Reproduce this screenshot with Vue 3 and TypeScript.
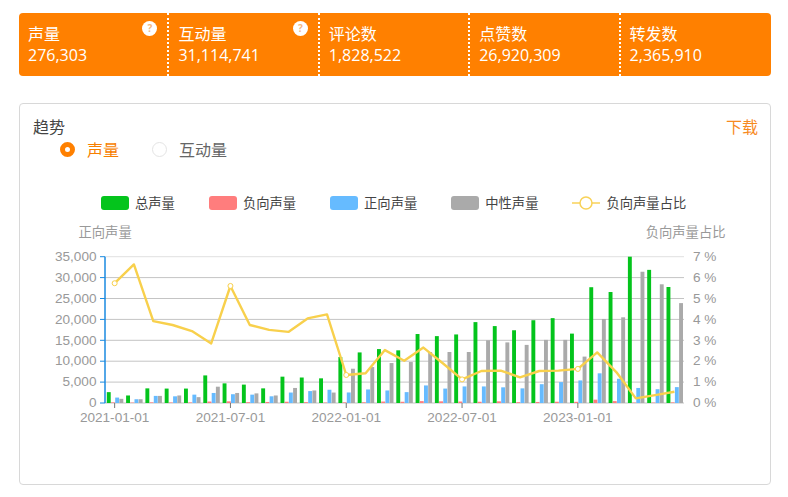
<script setup lang="ts">
const stats = [
  { label: '声量', value: '276,303', help: true },
  { label: '互动量', value: '31,114,741', help: true },
  { label: '评论数', value: '1,828,522', help: false },
  { label: '点赞数', value: '26,920,309', help: false },
  { label: '转发数', value: '2,365,910', help: false }
]

const legend = [
  { name: '总声量', color: '#04c41c' },
  { name: '负向声量', color: '#ff7d7d' },
  { name: '正向声量', color: '#66bbff' },
  { name: '中性声量', color: '#aaaaaa' }
]

const left = 105
const right = 684
const top = 256.7
const bottom = 403
const band = (right - left) / 30
const unit = (bottom - top) / 7

const total = [2600, 1800, 3500, 3450, 3450, 6600, 4700, 4400, 3500, 6300, 6100, 5900, 11000, 12100, 12900, 12600, 16500, 16000, 16400, 19350, 18400, 17400, 19800, 20300, 16600, 27700, 26550, 35000, 31850, 27750]
const neg = [150, 100, 150, 120, 130, 350, 400, 200, 250, 300, 200, 100, 150, 170, 350, 300, 450, 400, 350, 300, 400, 200, 250, 300, 280, 800, 450, 100, 100, 150]
const pos = [1300, 900, 1700, 1600, 2000, 2400, 2100, 2000, 1600, 2500, 2850, 3170, 2520, 3240, 3000, 2600, 4200, 3450, 3960, 3960, 3750, 3500, 4500, 5000, 5400, 7100, 5800, 3600, 3300, 3800]
const neu = [1000, 900, 1700, 1800, 1400, 3900, 2400, 2300, 1800, 3600, 3000, 2500, 8200, 8600, 9560, 9800, 12200, 12200, 12200, 15000, 14500, 13900, 15100, 15100, 11100, 20100, 20500, 31400, 28400, 23900]
const ratio = [5.73, 6.63, 3.92, 3.73, 3.44, 2.85, 5.6, 3.73, 3.5, 3.4, 4.05, 4.24, 1.34, 1.42, 2.53, 2.02, 2.65, 1.9, 1.13, 1.53, 1.55, 1.23, 1.53, 1.55, 1.63, 2.42, 1.47, 0.22, 0.38, 0.54]

const series = [
  { data: total, color: '#04c41c', offset: 1.8 },
  { data: neg, color: '#ff7d7d', offset: 6 },
  { data: pos, color: '#66bbff', offset: 10.2 },
  { data: neu, color: '#aaaaaa', offset: 14.4 }
]

const barWidth = 3.9
const bars = series.flatMap((s) =>
  s.data.map((v, i) => {
    const h = (v / 5000) * unit
    return { x: left + i * band + s.offset, y: bottom - h, h, color: s.color }
  })
)

const center = (i: number) => left + (i + 0.5) * band
const ratioY = (p: number) => bottom - p * unit
const linePoints = ratio.map((p, i) => `${center(i).toFixed(1)},${ratioY(p).toFixed(1)}`).join(' ')
const markers = [0, 6, 12, 18, 24].map((i) => ({ x: center(i), y: ratioY(ratio[i]) }))

const xLabels = [
  { i: 0, text: '2021-01-01' },
  { i: 6, text: '2021-07-01' },
  { i: 12, text: '2022-01-01' },
  { i: 18, text: '2022-07-01' },
  { i: 24, text: '2023-01-01' }
].map((l) => ({ x: center(l.i), text: l.text }))

const yRows = [0, 1, 2, 3, 4, 5, 6, 7].map((n) => ({
  y: bottom - n * unit,
  left: n === 0 ? '0' : (n * 5000).toLocaleString('en-US'),
  right: `${n} %`,
  top: n === 7
}))
</script>

<template>
  <div class="page">
    <section class="stats">
      <div v-for="s in stats" :key="s.label" class="stat">
        <div class="stat-label">{{ s.label }}</div>
        <div class="stat-value">{{ s.value }}</div>
        <span v-if="s.help" class="help">?</span>
      </div>
    </section>

    <section class="panel">
      <header class="panel-head">
        <span class="panel-title">趋势</span>
        <span class="download">下载</span>
      </header>
      <div class="radios">
        <span class="radio radio-on"><i class="dot"></i>声量</span>
        <span class="radio"><i class="dot"></i>互动量</span>
      </div>
      <div class="legend">
        <span v-for="l in legend" :key="l.name" class="legend-item">
          <i class="swatch" :style="{ background: l.color }"></i>{{ l.name }}
        </span>
        <span class="legend-item">
          <svg class="legend-line" width="28" height="14" viewBox="0 0 28 14">
            <line x1="0" y1="7" x2="28" y2="7" stroke="#f8d258" stroke-width="1.5" />
            <circle cx="14" cy="7" r="6" fill="#fff" stroke="#f8d258" stroke-width="1.5" />
          </svg>负向声量占比
        </span>
      </div>
      <svg class="chart" width="750" height="215" viewBox="20 220 750 215">
        <text class="axis-name" x="78.5" y="237">正向声量</text>
        <text class="axis-name" x="725.5" y="237" text-anchor="end">负向声量占比</text>

        <g v-for="r in yRows" :key="r.right">
          <line :x1="left" :x2="right" :y1="r.y" :y2="r.y" :stroke="r.top ? '#e0e0e0' : '#c4c4c4'" />
          <line :x1="left - 5" :x2="left" :y1="r.y" :y2="r.y" stroke="#1a8ae0" />
          <text class="tick" x="96.5" :y="r.y + 4.2" text-anchor="end">{{ r.left }}</text>
          <text class="tick" x="693" :y="r.y + 4.2">{{ r.right }}</text>
        </g>

        <line :x1="left" :x2="left" :y1="top" :y2="bottom" stroke="#1a8ae0" stroke-width="1.5" />

        <rect
          v-for="(b, i) in bars"
          :key="i"
          :x="b.x"
          :y="b.y"
          :width="barWidth"
          :height="b.h"
          :fill="b.color"
        />

        <g v-for="l in xLabels" :key="l.text">
          <line :x1="l.x" :x2="l.x" :y1="bottom" :y2="bottom + 5" stroke="#777" />
          <text class="tick" :x="l.x" y="422" text-anchor="middle">{{ l.text }}</text>
        </g>

        <polyline :points="linePoints" fill="none" stroke="#f8d04c" stroke-width="2.4" stroke-linejoin="round" />
        <circle
          v-for="m in markers"
          :key="m.x"
          :cx="m.x"
          :cy="m.y"
          r="2.5"
          fill="#fff"
          stroke="#f8d04c"
        />
      </svg>
    </section>
  </div>
</template>

<style>
html,
body {
  margin: 0;
  background: #fff;
}
</style>

<style scoped>
.page {
  width: 788px;
  height: 497px;
  box-sizing: border-box;
  padding: 13px 17px 12px 19px;
  font-family: "Open Sans", "Noto Sans CJK SC", sans-serif;
  overflow: hidden;
}

.stats {
  display: grid;
  grid-template-columns: repeat(5, 1fr);
  height: 63px;
  background: #ff8000;
  border-radius: 4px;
  color: #fff;
  font-size: 16px;
}

.stat {
  position: relative;
  box-sizing: border-box;
  padding: 9px 9px 0;
  border-right: 2px dotted #fff;
  line-height: 22px;
}

.stat:last-child {
  border-right: 0;
}

.stat-label {
  font-family: "Noto Sans CJK SC", sans-serif;
}

.help {
  position: absolute;
  top: 8px;
  right: 10px;
  width: 15px;
  height: 15px;
  border-radius: 50%;
  background: #fff;
  color: #f5b880;
  font-size: 10px;
  line-height: 15px;
  text-align: center;
  font-weight: 700;
}

.panel {
  margin-top: 27px;
  height: 382px;
  box-sizing: border-box;
  border: 1px solid #d8d8d8;
  border-radius: 4px;
  font-family: "Noto Sans CJK SC", sans-serif;
}

.panel-head {
  display: flex;
  justify-content: space-between;
  padding: 11px 12px 0 13px;
  font-size: 16px;
  line-height: 22px;
}

.panel-title {
  color: #444;
}

.download {
  color: #f78a1f;
}

.radios {
  display: flex;
  gap: 33px;
  padding-left: 40px;
  margin-top: 1px;
  font-size: 16px;
  line-height: 22px;
  color: #666;
}

.radio {
  display: inline-flex;
  align-items: center;
  gap: 12px;
}

.radio-on {
  color: #f77f00;
}

.dot {
  box-sizing: border-box;
  width: 15px;
  height: 15px;
  border: 1px solid #e4e4e4;
  border-radius: 50%;
  background: #fff;
}

.radio-on .dot {
  border: 5px solid #ff8000;
}

.legend {
  display: flex;
  gap: 34px;
  padding-left: 81px;
  margin-top: 35px;
  font-size: 13.3px;
  line-height: 16px;
  color: #444;
}

.legend-item {
  display: inline-flex;
  align-items: center;
  gap: 6px;
}

.swatch {
  width: 28px;
  height: 14px;
  border-radius: 3px;
}

.legend-line {
  display: block;
}

.chart {
  display: block;
  margin-top: 9px;
}

.axis-name {
  font-family: "Noto Sans CJK SC", sans-serif;
  font-size: 13.3px;
  fill: #999;
}

.tick {
  font-family: "Liberation Sans", Arial, sans-serif;
  font-size: 13.6px;
  fill: #999;
}
</style>
